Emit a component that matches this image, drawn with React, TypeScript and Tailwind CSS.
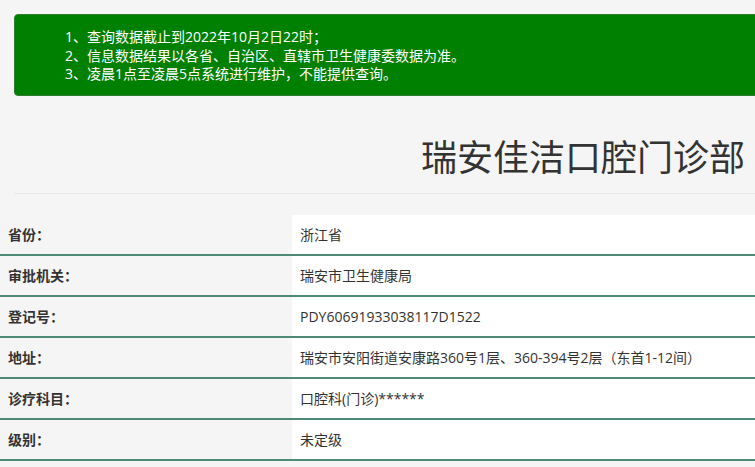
const notices = [
  "1、查询数据截止到2022年10月2日22时；",
  "2、信息数据结果以各省、自治区、直辖市卫生健康委数据为准。",
  "3、凌晨1点至凌晨5点系统进行维护，不能提供查询。",
];

const rows = [
  { label: "省份：", value: "浙江省" },
  { label: "审批机关：", value: "瑞安市卫生健康局" },
  { label: "登记号：", value: "PDY60691933038117D1522" },
  { label: "地址：", value: "瑞安市安阳街道安康路360号1层、360-394号2层（东首1-12间）" },
  { label: "诊疗科目：", value: "口腔科(门诊)******" },
  { label: "级别：", value: "未定级" },
];

export default function App() {
  return (
    <div
      className="h-[467px] w-[755px] overflow-hidden bg-[#f5f5f5] text-[#333]"
      style={{ fontFamily: '"Segoe UI", "Open Sans", "Noto Sans CJK SC", sans-serif' }}
    >
      <div className="pt-[14px] pl-[14px]">
        <div className="-mr-[20px] rounded-l-[4px] border border-[#2f7d2f] bg-[#008000] pt-[13px] pb-[11px] pl-[50px] text-[14px] leading-[18.5px] text-white">
          {notices.map((n) => (
            <p key={n}>{n}</p>
          ))}
        </div>
      </div>

      <div className="flex justify-end pt-[42px] pr-[10px]">
        <h1 className="text-[36px] leading-[40px] font-normal text-[#333]">瑞安佳洁口腔门诊部</h1>
      </div>
      <div className="mt-[15px] ml-[14px] h-px bg-[#e8e8e8]" />

      <div className="mt-[21px]">
        {rows.map((r) => (
          <div key={r.label} className="flex h-[41px] border-b-2 border-[#4f8a74]">
            <div className="flex w-[292px] items-center pl-[8px] text-[14px] font-bold text-[#333]">
              {r.label}
            </div>
            <div className="flex flex-1 items-center bg-white pl-[8px] text-[14px] text-[#333]">
              {r.value}
            </div>
          </div>
        ))}
      </div>
    </div>
  );
}
